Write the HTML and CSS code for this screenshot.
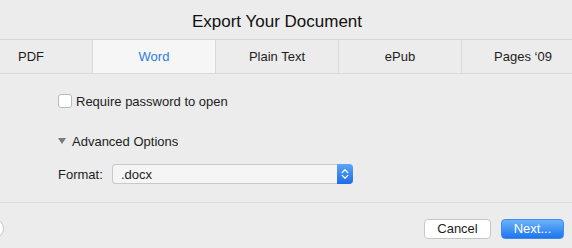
FILE: index.html
```html
<!DOCTYPE html>
<html lang="en">

<head>
  <meta charset="UTF-8">
  <meta name="viewport" content="width=device-width, initial-scale=1.0">
  <title>Export Your Document</title>
  <link rel="stylesheet" href="styles.css">
</head>

<body>
  <div class="dialog">
    <div class="title">Export Your Document</div>

    <div class="tabs">
      <div class="tab">PDF</div>
      <div class="tab active">Word</div>
      <div class="tab">Plain Text</div>
      <div class="tab">ePub</div>
      <div class="tab">Pages ‘09</div>
    </div>

    <div class="options">
      <label class="check">
        <span class="box"></span>
        Require password to open
      </label>

      <div class="disclosure">
        <span class="triangle"></span>
        Advanced Options
      </div>

      <div class="format-row">
        <span class="format-label">Format:</span>
        <div class="select">
          <span class="select-value">.docx</span>
          <span class="stepper">
            <svg width="8" height="12" viewBox="0 0 8 12">
              <path d="M1.2 4.6 L4 1.8 L6.8 4.6 M1.2 7.4 L4 10.2 L6.8 7.4" fill="none" stroke="#fff" stroke-width="1.3" stroke-linecap="round" stroke-linejoin="round" />
            </svg>
          </span>
        </div>
      </div>
    </div>

    <div class="footer">
      <span class="help"></span>
      <div class="buttons">
        <button class="btn">Cancel</button>
        <button class="btn primary">Next...</button>
      </div>
    </div>
  </div>
</body>

</html>
```

FILE: styles.css
```css
body {
  font-family: "Liberation Sans", Arial, sans-serif;
  margin: 0;
  padding: 0;
  background-color: #ececec;
  color: #1d1d1d;
  overflow: hidden;
}

.dialog {
  width: 614px;
  margin-left: -30px;
}

.title {
  height: 35px;
  padding-top: 4px;
  line-height: 35px;
  text-align: center;
  font-size: 17px;
  color: #111;
}

.tabs {
  display: flex;
  border-top: 1px solid #d9d9d9;
  border-bottom: 1px solid #d9d9d9;
}

.tab {
  flex: 1;
  height: 33px;
  line-height: 33px;
  text-align: center;
  font-size: 13px;
  border-left: 1px solid #d9d9d9;
  background-color: #ececec;
}

.tab:first-child {
  border-left: none;
}

.tab.active {
  background-color: #f6f6f6;
  color: #2f7de1;
}

.options {
  padding: 19px 0 18px 88px;
  font-size: 13px;
}

.check {
  display: flex;
  align-items: center;
  height: 16px;
  gap: 4px;
}

.box {
  width: 12px;
  height: 12px;
  border: 1px solid #b9b9b9;
  border-radius: 3px;
  background-color: #fff;
}

.disclosure {
  display: flex;
  align-items: center;
  height: 16px;
  margin-top: 24px;
  gap: 6px;
}

.triangle {
  width: 0;
  height: 0;
  border-left: 4px solid transparent;
  border-right: 4px solid transparent;
  border-top: 6px solid #7a7a7a;
}

.format-row {
  display: flex;
  align-items: center;
  margin-top: 15px;
}

.format-label {
  width: 54px;
}

.select {
  display: flex;
  align-items: center;
  width: 241px;
  height: 20px;
  box-sizing: border-box;
  border: 1px solid #c9c9c9;
  border-right: none;
  border-radius: 4px;
  background-color: #f5f5f5;
}

.select-value {
  flex: 1;
  padding-left: 8px;
}

.stepper {
  display: flex;
  align-items: center;
  justify-content: center;
  width: 16px;
  height: 20px;
  margin-top: -1px;
  margin-bottom: -1px;
  border-radius: 0 4px 4px 0;
  background-image: linear-gradient(#5aa6f8, #1f6de6);
}

.footer {
  display: flex;
  align-items: center;
  border-top: 1px solid #dddddd;
  padding: 15px 20px 0 13px;
}

.help {
  width: 19px;
  height: 19px;
  border: 1px solid #c4c4c4;
  border-radius: 50%;
  background-color: #fff;
}

.buttons {
  display: flex;
  gap: 10px;
  margin-left: auto;
}

.btn {
  font-family: "Liberation Sans", Arial, sans-serif;
  font-size: 13px;
  height: 20px;
  padding: 0;
  border: 1px solid #c6c6c6;
  border-radius: 4px;
  background-color: #fff;
  color: #1d1d1d;
  width: 67px;
}

.btn.primary {
  width: 63px;
  border-color: #3f8cf0;
  background-image: linear-gradient(#6ab3fa, #1d74ee);
  color: #fff;
}
```
